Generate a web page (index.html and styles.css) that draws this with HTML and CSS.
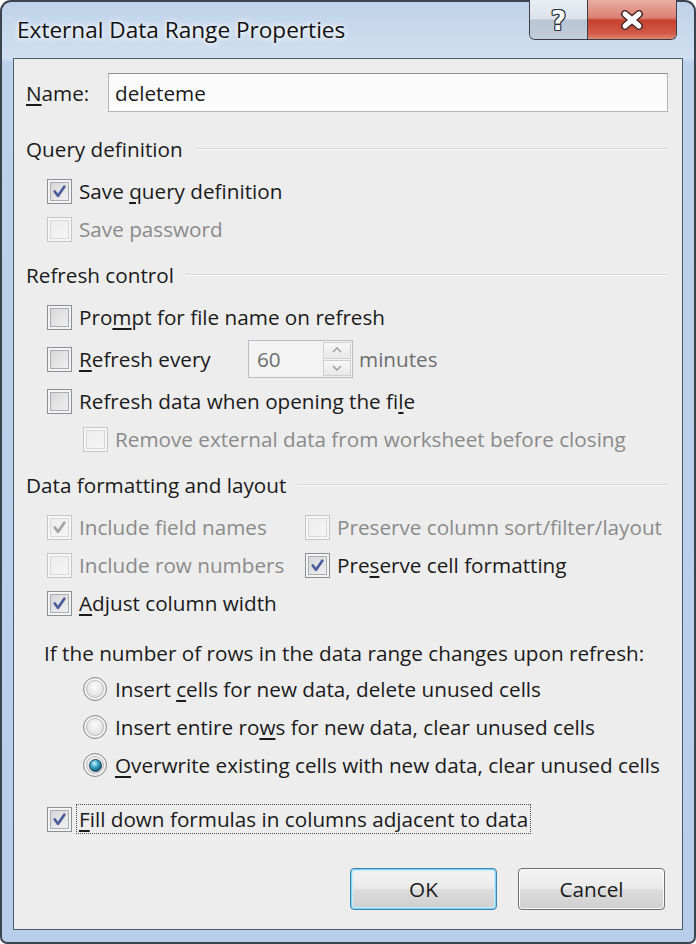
FILE: index.html
```html
<!DOCTYPE html>
<html lang="en">
  <head>
    <meta charset="UTF-8" />
    <meta name="viewport" content="width=device-width, initial-scale=1.0" />
    <title>External Data Range Properties</title>
    <link rel="stylesheet" href="styles.css">
  </head>
  <body>
    <div class="window">
      <div class="titlebar">
        <span class="title">External Data Range Properties</span>
        <div class="caption-buttons">
          <span class="cap-btn help">?</span>
          <span class="cap-btn close">
            <svg width="30" height="20" viewBox="0 0 30 20">
              <path d="M8 4 L22 16 M22 4 L8 16" stroke="#4a2a26" stroke-width="8" stroke-linecap="round" />
              <path d="M8 4 L22 16 M22 4 L8 16" stroke="#ffffff" stroke-width="5" stroke-linecap="round" />
            </svg>
          </span>
        </div>
      </div>

      <div class="client">
        <div class="name-row">
          <label class="name-label"><u>N</u>ame:</label>
          <div class="textbox">deleteme</div>
        </div>

        <div class="group-head gap-top">Query definition</div>
        <div class="row ind1 mt4">
          <span class="cb"><svg viewBox="0 0 24 24"><path d="M7 12 L10.5 16.5 L17 7" /></svg></span>
          <span>Save <u>q</u>uery definition</span>
        </div>
        <div class="row ind1 disabled">
          <span class="cb"></span>
          <span>Save password</span>
        </div>

        <div class="group-head mt8">Refresh control</div>
        <div class="row ind1 mt4">
          <span class="cb"></span>
          <span>Pro<u>m</u>pt for file name on refresh</span>
        </div>
        <div class="row ind1 mt4">
          <span class="cb"></span>
          <span class="every"><u>R</u>efresh every</span>
          <div class="spin">
            <span class="spin-value">60</span>
            <div class="spin-buttons">
              <span class="spin-btn"><svg width="10" height="6" viewBox="0 0 10 6"><path d="M1 5 L5 1 L9 5" /></svg></span>
              <span class="spin-btn"><svg width="10" height="6" viewBox="0 0 10 6"><path d="M1 1 L5 5 L9 1" /></svg></span>
            </div>
          </div>
          <span class="minutes">minutes</span>
        </div>
        <div class="row ind1 mt4">
          <span class="cb"></span>
          <span>Refresh data when opening the fi<u>l</u>e</span>
        </div>
        <div class="row ind2 disabled">
          <span class="cb"></span>
          <span>Remove external data from worksheet before closing</span>
        </div>

        <div class="group-head mt8">Data formatting and layout</div>
        <div class="options-grid mt4">
          <div class="row disabled">
            <span class="cb"><svg viewBox="0 0 24 24"><path d="M7 12 L10.5 16.5 L17 7" /></svg></span>
            <span>Include field names</span>
          </div>
          <div class="row disabled">
            <span class="cb"></span>
            <span>Preserve column sort/filter/layout</span>
          </div>
          <div class="row disabled">
            <span class="cb"></span>
            <span>Include row numbers</span>
          </div>
          <div class="row">
            <span class="cb"><svg viewBox="0 0 24 24"><path d="M7 12 L10.5 16.5 L17 7" /></svg></span>
            <span>Pre<u>s</u>erve cell formatting</span>
          </div>
          <div class="row">
            <span class="cb"><svg viewBox="0 0 24 24"><path d="M7 12 L10.5 16.5 L17 7" /></svg></span>
            <span><u>A</u>djust column width</span>
          </div>
        </div>

        <div class="if-row">If the number of rows in the data range changes upon refresh:</div>
        <div class="row ind2">
          <span class="radio"></span>
          <span>Insert <u>c</u>ells for new data, delete unused cells</span>
        </div>
        <div class="row ind2">
          <span class="radio"></span>
          <span>Insert entire ro<u>w</u>s for new data, clear unused cells</span>
        </div>
        <div class="row ind2">
          <span class="radio selected"><span class="dot"></span></span>
          <span><u>O</u>verwrite existing cells with new data, clear unused cells</span>
        </div>

        <div class="row ind1 fill-row">
          <span class="cb"><svg viewBox="0 0 24 24"><path d="M7 12 L10.5 16.5 L17 7" /></svg></span>
          <span class="focus"><u>F</u>ill down formulas in columns adjacent to data</span>
        </div>

        <div class="buttons">
          <button class="btn default">OK</button>
          <button class="btn">Cancel</button>
        </div>
      </div>
    </div>
  </body>
</html>
```

FILE: styles.css
```css
* {
  box-sizing: border-box;
}

body {
  margin: 0;
  background: #ffffff;
  font-family: "Open Sans", "Noto Sans", sans-serif;
  font-size: 20.7px;
  color: #1a1a1a;
}

u {
  text-decoration-thickness: 2px;
  text-underline-offset: 3px;
}

.window {
  width: 696px;
  height: 944px;
  display: flex;
  flex-direction: column;
  border: 2px solid #3b434d;
  border-radius: 11px 11px 7px 7px;
  background: linear-gradient(#c0d3ea, #d0dff0 56px, #bcd2ec 60px, #b7cdea);
}

/* title bar */
.titlebar {
  height: 56px;
  flex: none;
  display: flex;
  align-items: flex-start;
  padding-left: 15px;
}

.title {
  margin-top: 14px;
  font-size: 22.6px;
  line-height: 28px;
  color: #111;
  text-shadow: 0 0 8px #ffffff, 0 0 4px #ffffff;
}

.caption-buttons {
  margin-left: auto;
  margin-right: 17px;
  margin-top: -2px;
  display: flex;
  height: 40px;
  border: 1px solid #3a3f47;
  border-top: none;
  border-radius: 0 0 6px 6px;
  overflow: hidden;
}

.cap-btn {
  display: flex;
  align-items: center;
  justify-content: center;
}

.help {
  width: 57px;
  padding-top: 2px;
  background: linear-gradient(#e9eef4, #dbe2ea 48%, #b8c4d1 52%, #c3cedb);
  font-family: "DejaVu Sans", sans-serif;
  font-weight: bold;
  font-size: 26px;
  color: #ffffff;
  text-shadow: 1px 0 0 #2e353d, -1px 0 0 #2e353d, 0 1px 0 #2e353d, 0 -1px 0 #2e353d,
    1px 1px 0 #2e353d, -1px -1px 0 #2e353d, 1px -1px 0 #2e353d, -1px 1px 0 #2e353d;
}

.close {
  width: 89px;
  border-left: 1px solid #3a3f47;
  background: linear-gradient(#e9aea4, #dc7f72 46%, #c6402f 52%, #d25a48 85%, #df8672);
}

/* client area */
.client {
  flex: 1;
  margin: 0 11px 12px;
  border: 1px solid #4e5a66;
  background: #ededed;
  padding: 14px 14px 0 12px;
  display: flex;
  flex-direction: column;
}

.name-row {
  display: flex;
  align-items: center;
  height: 39px;
}

.name-label {
  width: 82px;
}

.textbox {
  flex: 1;
  height: 39px;
  display: flex;
  align-items: center;
  padding-left: 6px;
  background: #fbfbfb;
  border: 1px solid #b4b6ba;
  border-top-color: #8e9094;
}

.group-head {
  display: flex;
  align-items: center;
  height: 38px;
}

.group-head::after {
  content: "";
  flex: 1;
  margin-left: 12px;
  border-top: 1px solid #d6d6d6;
  border-bottom: 1px solid #fafafa;
}

.gap-top {
  margin-top: 18px;
}

.mt4 {
  margin-top: 4px;
}

.mt8 {
  margin-top: 8px;
}

.row {
  display: flex;
  align-items: center;
  height: 38px;
  white-space: nowrap;
}

.ind1 {
  padding-left: 21px;
}

.ind2 {
  padding-left: 57px;
}

.disabled {
  color: #8a8a8a;
}

/* checkbox */
.cb {
  flex: none;
  width: 25px;
  height: 25px;
  margin-right: 7px;
  border: 1px solid #8e8f90;
  background: linear-gradient(135deg, #d3d3d3, #f4f4f4);
  box-shadow: inset 0 0 0 2px #f4f4f4, inset 0 0 0 3px #a9acb0;
}

.cb svg {
  display: block;
  width: 23px;
  height: 23px;
}

.cb path {
  fill: none;
  stroke: #4b5e9c;
  stroke-width: 2.8;
  stroke-linecap: round;
  stroke-linejoin: round;
}

.disabled .cb {
  border-color: #c6c6c6;
  background: linear-gradient(135deg, #ebebeb, #f7f7f7);
  box-shadow: inset 0 0 0 2px #f6f6f6, inset 0 0 0 3px #d8d8d8;
}

.disabled .cb path {
  stroke: #a4a4a4;
}

/* spinner */
.every {
  width: 169px;
}

.spin {
  display: flex;
  width: 105px;
  height: 38px;
  border: 1px solid #babdc2;
  background: #f3f3f3;
}

.spin-value {
  flex: 1;
  display: flex;
  align-items: center;
  padding-left: 8px;
  color: #6e6e6e;
}

.spin-buttons {
  width: 30px;
  display: flex;
  flex-direction: column;
  padding: 1px;
  gap: 1px;
}

.spin-btn {
  flex: 1;
  display: flex;
  align-items: center;
  justify-content: center;
  border: 1px solid #cfcfcf;
  background: linear-gradient(#f8f8f8, #e8e8e8);
}

.spin-btn path {
  fill: none;
  stroke: #9a9a9a;
  stroke-width: 1.4;
}

.minutes {
  margin-left: 6px;
  color: #6e6e6e;
}

/* data formatting grid */
.options-grid {
  display: grid;
  grid-template-columns: 258px auto;
  padding-left: 21px;
}

.if-row {
  margin-top: 14px;
  height: 34px;
  display: flex;
  align-items: center;
  padding-left: 18px;
  white-space: nowrap;
}

/* radio */
.radio {
  flex: none;
  width: 24px;
  height: 24px;
  margin-right: 8px;
  border-radius: 50%;
  border: 1px solid #8b8b8b;
  background: radial-gradient(circle at 50% 40%, #fbfbfb, #e6e6e6 45%, #c9c9c9);
  box-shadow: inset 0 0 0 2px #f2f2f2, inset 0 0 0 3px #bdbdbd;
  display: flex;
  align-items: center;
  justify-content: center;
}

.dot {
  width: 13px;
  height: 13px;
  border-radius: 50%;
  border: 1px solid #16425a;
  background: radial-gradient(circle at 40% 32%, #c4f0fb, #3ba3c8 40%, #0d4f70 80%);
}

.fill-row {
  margin-top: 16px;
}

.fill-row .cb {
  margin-right: 4px;
}

.focus {
  border: 1px dotted #4a4a4a;
  padding: 1px 2px;
  line-height: 26px;
}

/* dialog buttons */
.buttons {
  margin-top: 30px;
  margin-right: 3px;
  display: flex;
  justify-content: flex-end;
  gap: 21px;
}

.btn {
  width: 147px;
  height: 42px;
  font-family: inherit;
  font-size: 20.7px;
  color: #1a1a1a;
  border: 1px solid #707070;
  border-radius: 4px;
  background: linear-gradient(#f3f3f3, #ebebeb 48%, #dcdcdc 52%, #cfcfcf);
  box-shadow: inset 0 0 0 1px #fbfbfb;
}

.btn.default {
  border-color: #3c7fb1;
  box-shadow: inset 0 0 0 1px #7ed3f2, inset 0 0 0 2px #c6ecf9;
}
```
